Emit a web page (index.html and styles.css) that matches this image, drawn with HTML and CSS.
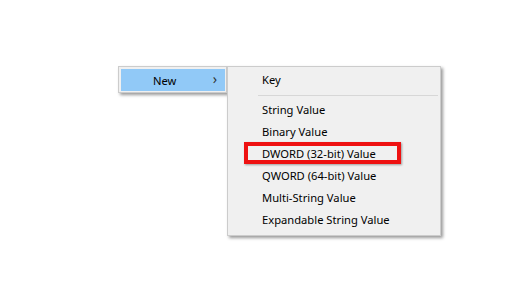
FILE: index.html
```html
<!DOCTYPE html>
<html>
<head>
<meta charset="utf-8">
<link rel="stylesheet" href="styles.css">
</head>
<body>
<div class="stage">
  <div class="menu parent">
    <div class="item active"><span class="label">New</span><span class="chev">&#x203A;</span></div>
  </div>
  <div class="menu sub">
    <div class="item">Key</div>
    <div class="sep"></div>
    <div class="item">String Value</div>
    <div class="item">Binary Value</div>
    <div class="item marked"><span class="box"></span>DWORD (32-bit) Value</div>
    <div class="item">QWORD (64-bit) Value</div>
    <div class="item">Multi-String Value</div>
    <div class="item">Expandable String Value</div>
  </div>
</div>
</body>
</html>
```
FILE: styles.css
```css
html, body {
  margin: 0;
  padding: 0;
  background: #ffffff;
  width: 519px;
  height: 304px;
  overflow: hidden;
}
body {
  font-family: "Noto Sans", "Open Sans", sans-serif;
  font-size: 11.2px;
  color: #000;
}
.stage {
  display: flex;
  align-items: flex-start;
  padding: 66px 0 0 118px;
}
.menu {
  background: #f0f0f0;
  border: 1px solid #cccccc;
  box-shadow: 2px 2px 3px rgba(0,0,0,0.4);
  box-sizing: border-box;
}
.parent {
  width: 109px;
  padding: 2px 1px 1px 2px;
  position: relative;
  z-index: 0;
}
.parent .item {
  height: 22px;
  display: flex;
  align-items: center;
  background: #91c9f7;
  padding-left: 32px;
  padding-right: 8px;
}
.parent .label {
  flex: 1;
}
.chev {
  font-size: 14px;
  color: #333;
  line-height: 1;
  margin-top: -2px;
}
.sub {
  width: 214px;
  padding: 2px 2px 4px 2px;
  position: relative;
  z-index: 1;
}
.sub .item {
  height: 22px;
  line-height: 22px;
  padding-left: 32px;
  position: relative;
  white-space: nowrap;
}
.sep {
  height: 1px;
  background: #d7d7d7;
  margin: 4px 0 3px 28px;
}
.box {
  position: absolute;
  left: 14px;
  top: -1px;
  width: 157px;
  height: 22px;
  border: 4px solid #ee1111;
  box-sizing: border-box;
  box-shadow: 1px 1px 2px rgba(0,0,0,0.35);
}
```
